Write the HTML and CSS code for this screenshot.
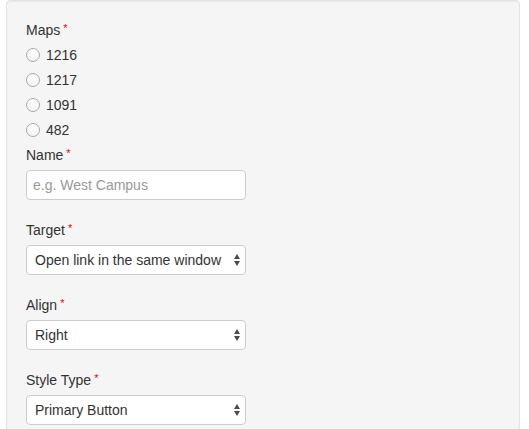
FILE: index.html
```html
<!DOCTYPE html>
<html>
<head>
<meta charset="utf-8">
<link rel="stylesheet" href="styles.css">
</head>
<body>
<div class="page">
  <form class="well">
    <div class="group group-radios">
      <label class="lbl">Maps<span class="req">*</span></label>
      <div class="radios">
        <label class="radio"><input type="radio" name="map"><span>1216</span></label>
        <label class="radio"><input type="radio" name="map"><span>1217</span></label>
        <label class="radio"><input type="radio" name="map"><span>1091</span></label>
        <label class="radio"><input type="radio" name="map"><span>482</span></label>
      </div>
    </div>
    <div class="group">
      <label class="lbl">Name<span class="req">*</span></label>
      <input class="ctrl" type="text" placeholder="e.g. West Campus">
    </div>
    <div class="group">
      <label class="lbl">Target<span class="req">*</span></label>
      <div class="sel"><select class="ctrl"><option>Open link in the same window</option></select></div>
    </div>
    <div class="group">
      <label class="lbl">Align<span class="req">*</span></label>
      <div class="sel"><select class="ctrl"><option>Right</option></select></div>
    </div>
    <div class="group">
      <label class="lbl">Style Type<span class="req">*</span></label>
      <div class="sel"><select class="ctrl"><option>Primary Button</option></select></div>
    </div>
  </form>
</div>
</body>
</html>
```
FILE: styles.css
```css
html, body {
  margin: 0;
  padding: 0;
  background: #fff;
  font-family: "Liberation Sans", Arial, sans-serif;
  font-size: 14px;
  line-height: 20px;
  color: #333;
}
.page {
  padding: 0 9px 0 6px;
}
.well {
  display: flex;
  flex-direction: column;
  margin: 0;
  padding: 19px 19px 0;
  background: #f5f5f5;
  border: 1px solid #e3e3e3;
  border-radius: 4px;
  box-shadow: inset 0 1px 1px rgba(0,0,0,.05);
}
.group {
  display: flex;
  flex-direction: column;
  gap: 5px;
  align-items: flex-start;
  margin-bottom: 20px;
}
.group-radios {
  margin-bottom: 5px;
}
.lbl {
  display: block;
  height: 20px;
  font-weight: normal;
}
.req {
  color: #e00;
  font-size: 11px;
  margin-left: 3px;
  vertical-align: top;
  line-height: 16px;
}
.radios {
  display: flex;
  flex-direction: column;
  gap: 5px;
}
.radio {
  display: flex;
  align-items: center;
  height: 20px;
  gap: 6px;
}
.radio input {
  appearance: none;
  -webkit-appearance: none;
  margin: 0;
  width: 14px;
  height: 14px;
  border: 1px solid #a8a8a8;
  border-radius: 50%;
  background: linear-gradient(#fff, #f4f4f4);
  box-sizing: border-box;
}
.ctrl {
  box-sizing: border-box;
  width: 220px;
  height: 30px;
  margin: 0;
  border: 1px solid #ccc;
  border-radius: 4px;
  background: #fff;
  font-family: "Liberation Sans", Arial, sans-serif;
  font-size: 14px;
  color: #333;
  padding: 0 6px;
  outline: none;
}
.ctrl::placeholder {
  color: #999;
}
.sel {
  position: relative;
  width: 220px;
  height: 30px;
}
.sel select {
  appearance: none;
  -webkit-appearance: none;
  padding: 0 20px 0 8px;
}
.sel::before,
.sel::after {
  content: "";
  position: absolute;
  right: 6px;
  width: 0;
  height: 0;
  border-left: 3.5px solid transparent;
  border-right: 3.5px solid transparent;
  pointer-events: none;
}
.sel::before {
  top: 9px;
  border-bottom: 5px solid #4a4a4a;
}
.sel::after {
  top: 16px;
  border-top: 5px solid #4a4a4a;
}
```
